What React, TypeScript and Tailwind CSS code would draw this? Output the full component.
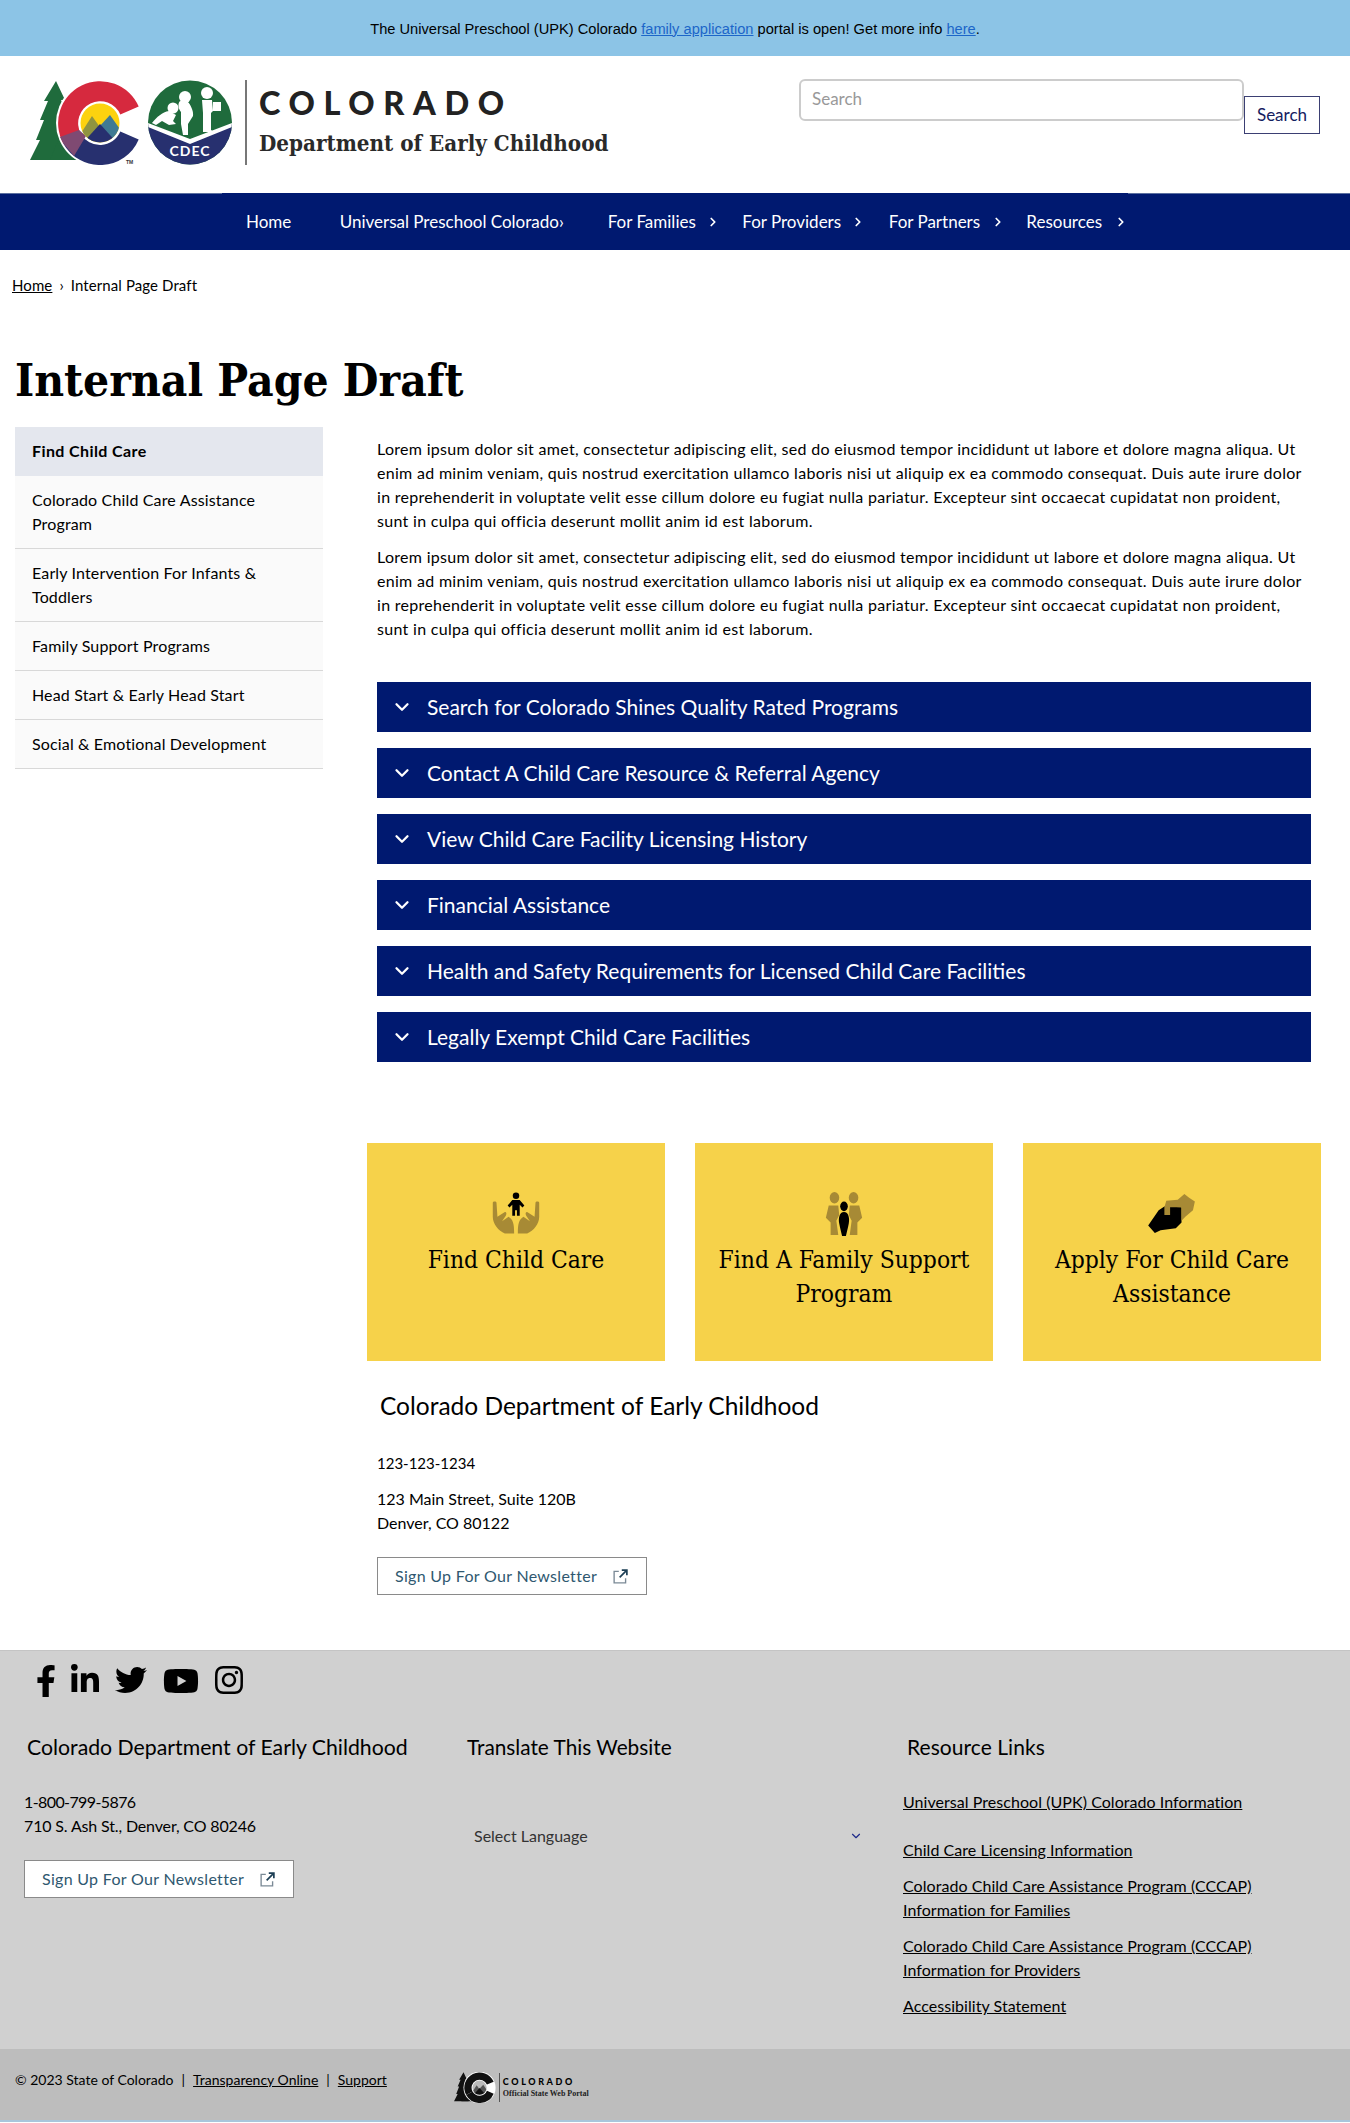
import { ChevronDown, ChevronRight } from "lucide-react";
import { FaFacebookF, FaInstagram, FaLinkedinIn, FaTwitter, FaYoutube } from "react-icons/fa";

const slab = "font-['DejaVu_Serif_Condensed','DejaVu_Serif',serif]";
const sans = "font-['Lato','Noto_Sans',sans-serif]";

const lorem =
  "Lorem ipsum dolor sit amet, consectetur adipiscing elit, sed do eiusmod tempor incididunt ut labore et dolore magna aliqua. Ut enim ad minim veniam, quis nostrud exercitation ullamco laboris nisi ut aliquip ex ea commodo consequat. Duis aute irure dolor in reprehenderit in voluptate velit esse cillum dolore eu fugiat nulla pariatur. Excepteur sint occaecat cupidatat non proident, sunt in culpa qui officia deserunt mollit anim id est laborum.";

const sideItems = [
  "Colorado Child Care Assistance Program",
  "Early Intervention For Infants & Toddlers",
  "Family Support Programs",
  "Head Start & Early Head Start",
  "Social & Emotional Development",
];

const accordions = [
  "Search for Colorado Shines Quality Rated Programs",
  "Contact A Child Care Resource & Referral Agency",
  "View Child Care Facility Licensing History",
  "Financial Assistance",
  "Health and Safety Requirements for Licensed Child Care Facilities",
  "Legally Exempt Child Care Facilities",
];

function CoMark({ mono = false }: { mono?: boolean }) {
  const tree = mono ? "#111" : "#1f6b3c";
  const red = mono ? "#111" : "#d6293e";
  const blue = mono ? "#111" : "#27306f";
  return (
    <>
      <path
        d="M26 1 L35 20 L31 20 L38 36 L34 36 L40 80 L0 80 L10 60 L6 60 L14 40 L10 40 L18 21 L14 21 Z"
        fill={tree}
      />
      <path d="M30 56 L50 80 L20 80 Z" fill={tree} />
      <circle cx="70" cy="43" r="44" fill="#fff" />
      <path d="M108.7 26.6 A42 42 0 1 0 33.3 63.4 L50.8 53.7 A22 22 0 1 1 90.3 34.4 Z" fill={red} />
      <path d="M33.3 63.4 A42 42 0 0 0 108.7 59.4 L90.3 51.6 A22 22 0 0 1 50.8 53.7 Z" fill={blue} />
      {!mono && <path d="M30 57 L33.3 63.4 L44 76 L56 56 L49 50 Z" fill="#7f4a72" />}
      <clipPath id={mono ? "sun-mono" : "sun"}>
        <circle cx="70" cy="43" r="19.5" />
      </clipPath>
      <g clipPath={mono ? "url(#sun-mono)" : "url(#sun)"}>
        <rect x="48" y="22" width="44" height="44" fill={mono ? "#bbb" : "#fcd20f"} />
        <path d="M48 58 L62 36 L72 50 L60 66 Z" fill={mono ? "#555" : "#8f9440"} />
        <path d="M68 48 L80 35 L92 52 L84 60 Z" fill={mono ? "#555" : "#3f7a93"} />
        <path d="M50 66 L70 44 L90 66 Z" fill={blue} />
      </g>
      {!mono && (
        <text x="96" y="84" fontSize="5" fontWeight="700" fill="#333" fontFamily="Liberation Sans">
          TM
        </text>
      )}
    </>
  );
}

function HeaderLogo() {
  return (
    <svg viewBox="0 0 206 85" className="w-[206px] h-[85px] shrink-0">
      <CoMark />
      {/* CDEC badge */}
      <clipPath id="badge">
        <circle cx="160" cy="42.5" r="42" />
      </clipPath>
      <g clipPath="url(#badge)">
        <rect x="118" y="0" width="84" height="85" fill="#1f6b3c" />
        <path d="M118 44 L160 60 L202 44 L202 85 L118 85 Z" fill="#27306f" />
        <path d="M118 43 L160 59 L202 43 L202 47 L160 64 L118 47 Z" fill="#fff" />
        {/* baby */}
        <circle cx="143" cy="28" r="5.5" fill="#fff" />
        <path d="M139 31 C132 32 127 37 122 43 L126 45 L132 41 L139 45 L146 44 L143 41 L146 35 Z" fill="#fff" />
        {/* toddler */}
        <circle cx="155" cy="17" r="6" fill="#fff" />
        <path d="M150 21 C147 24 149 30 151 32 L151 44 L153 55 L158 55 L158 44 L163 36 C164 31 160 24 158 22 Z" fill="#fff" />
        {/* child with book */}
        <circle cx="177" cy="13" r="6" fill="#fff" />
        <path d="M172 20 L182 20 L183 31 L181 33 L181 50 L184 52 L173 52 L173 33 Z" fill="#fff" />
        <rect x="183" y="22" width="8" height="9" fill="#fff" />
        <text x="160" y="76" textAnchor="middle" fontSize="14" fontWeight="700" fill="#fff" letterSpacing="1" fontFamily="Lato">
          CDEC
        </text>
      </g>
    </svg>
  );
}

function SmallLogo() {
  return (
    <div className="flex items-center h-[31px]">
      <svg viewBox="0 0 115 85" className="w-[42px] h-[31px]">
        <CoMark mono />
      </svg>
      <div className="ml-[3px] pl-[3px] border-l border-[#555] h-[29px] flex flex-col justify-center">
        <div className={`${sans} font-black text-[9px] leading-[12px] tracking-[2.6px] text-black`}>COLORADO</div>
        <div className="font-['Liberation_Serif',serif] font-bold text-[8px] leading-[11px] text-[#222]">
          Official State Web Portal
        </div>
      </div>
    </div>
  );
}

function ExternalIcon() {
  return (
    <svg viewBox="0 0 20 20" className="w-[17px] h-[17px]" fill="none" strokeWidth="1.6">
      <path d="M8 4 H2.5 V17.5 H16 V12" stroke="#7b8a96" />
      <path d="M9 11 L17.5 2.5 M11.5 2.5 H17.5 V8.5" stroke="#1d3f55" strokeWidth="2" />
    </svg>
  );
}

function NewsletterButton({ className }: { className: string }) {
  return (
    <a className={`flex items-center w-[270px] h-[38px] pl-[17px] bg-white border border-[#8a8a8a] text-[#2f5870] text-[16px] ${className}`}>
      <span className="tracking-[0.3px]">Sign Up For Our Newsletter</span>
      <span className="ml-[15px]">
        <ExternalIcon />
      </span>
    </a>
  );
}

function HandsIcon() {
  return (
    <svg viewBox="0 0 56 44" className="w-[52px] h-[42px]">
      <g fill="#a78a35">
        <path d="M3 11 C3 9 7 9 7 11 L8 26 L16 21 C18 21 18 23 17 25 L13 31 L20 26 C25 29 26 34 26 44 L16 44 C9 41 3 34 3 26 Z" />
        <path d="M53 11 C53 9 49 9 49 11 L48 26 L40 21 C38 21 38 23 39 25 L43 31 L36 26 C31 29 30 34 30 44 L40 44 C47 41 53 34 53 26 Z" />
      </g>
      <g fill="#000">
        <circle cx="28" cy="3.5" r="3.5" />
        <path d="M24 8 H32 L37 14 L35 16 L32 13 V25 H29 V19 H27 V25 H24 V13 L21 16 L19 14 Z" />
      </g>
    </svg>
  );
}

function FamilyIcon() {
  return (
    <svg viewBox="0 0 44 46" className="w-[42px] h-[44px]">
      <g fill="#a78a35">
        <ellipse cx="12" cy="6" rx="5" ry="6" />
        <ellipse cx="32" cy="6" rx="5" ry="6" />
        <path d="M6 14 H16 L17 24 L14 30 L16 45 H8 L8 32 L3 27 Z" />
        <path d="M38 14 H28 L27 24 L30 30 L28 45 H36 L36 32 L41 27 Z" />
      </g>
      <g fill="#000">
        <ellipse cx="22" cy="15" rx="4" ry="5" />
        <path d="M22 21 C27 21 28 28 27 33 C26 38 25 42 24 46 H20 C19 42 18 38 17 33 C16 28 17 21 22 21 Z" />
      </g>
    </svg>
  );
}

function HandIcon() {
  return (
    <svg viewBox="0 0 52 42" className="w-[50px] h-[40px]">
      <path d="M1 33 L12 17 L18 13 L36 14 L36 30 L30 36 L14 38 L8 41 Z" fill="#000" />
      <path d="M18 14 L20 7 L32 6 L39 0 L44 4 L50 8 L48 17 L40 24 L36 28 L36 14 L24 14 L24 22 L18 22 Z" fill="#a78a35" />
    </svg>
  );
}

export default function App() {
  return (
    <div className={`w-[1350px] bg-white text-black ${sans} text-[16px] leading-[24px]`}>
      {/* alert banner */}
      <div className="h-[56px] pt-[1px] bg-[#8cc4e6] flex items-center justify-center font-['Liberation_Sans',sans-serif] text-[14.65px]">
        <p>
          The Universal Preschool (UPK) Colorado{" "}
          <a className="text-[#1c66c9] underline">family application</a> portal is open! Get more info{" "}
          <a className="text-[#1c66c9] underline">here</a>.
        </p>
      </div>

      {/* header */}
      <header className="h-[137px] flex">
        <div className="pl-[30px] pt-[24px] flex">
          <HeaderLogo />
          <div className="ml-[9px] w-[2px] h-[85px] bg-[#777]" />
          <div className="ml-[12px]">
            <div className="mt-[5px] text-[32.5px] leading-[36px] font-black tracking-[8.6px] text-[#222]">COLORADO</div>
            <div className={`${slab} mt-[8px] text-[22.2px] leading-[28px] font-bold text-[#2a2a2a]`}>
              Department of Early Childhood
            </div>
          </div>
        </div>
        <div className="ml-auto mr-[30px] flex items-start">
          <div className="mt-[23px] w-[445px] h-[42px] border-2 border-[#ccc] rounded-[6px] flex items-center pl-[11px] pb-[2px] text-[17px] text-[#999]">
            Search
          </div>
          <button className="mt-[40px] w-[76px] h-[38px] border border-[#3b3f73] text-[#14205f] text-[17px]">Search</button>
        </div>
      </header>

      {/* main nav */}
      <nav className="h-[57px] bg-[#001970] border-t border-[#5b6f9f] text-white">
        <div className="w-[906px] ml-[222px] h-full bg-[#001970] -mt-px border-t border-[#001970] flex items-center text-[17px]">
          <a className="ml-[24px] w-[94px]">Home</a>
          <a className="w-[269px]">Universal Preschool Colorado›</a>
          <a className="flex items-center w-[135px]">
            For Families
            <ChevronRight className="ml-[10px] w-[14px] h-[14px]" strokeWidth={3} />
          </a>
          <a className="flex items-center w-[147px]">
            For Providers
            <ChevronRight className="ml-[10px] w-[14px] h-[14px]" strokeWidth={3} />
          </a>
          <a className="flex items-center w-[138px]">
            For Partners
            <ChevronRight className="ml-[11px] w-[14px] h-[14px]" strokeWidth={3} />
          </a>
          <a className="flex items-center">
            Resources
            <ChevronRight className="ml-[12px] w-[14px] h-[14px]" strokeWidth={3} />
          </a>
        </div>
      </nav>

      {/* breadcrumb */}
      <div className="pl-[12px] mt-[23px] text-[15px] tracking-[0.1px] flex">
        <a className="underline">Home</a>
        <span className="mx-[7px]">›</span>
        <span>Internal Page Draft</span>
      </div>

      <h1 className={`${slab} ml-[15px] mt-[51px] mb-[15px] h-[64px] text-[45.7px] leading-[64px] font-bold`}>
        Internal Page Draft
      </h1>

      <div className="flex pl-[15px]">
        {/* side nav */}
        <aside className="w-[308px] shrink-0 self-start tracking-[0.15px]">
          <div className="h-[49px] bg-[#e4e7ee] pl-[17px] pb-[2px] flex items-center font-bold tracking-[0.4px]">Find Child Care</div>
          {sideItems.map((item) => (
            <div key={item} className="bg-[#fafafa] border-b border-[#d8d8d8] px-[17px] py-[12px] pr-[40px]">
              {item}
            </div>
          ))}
        </aside>

        {/* content */}
        <main className="ml-[54px] w-[934px] pt-[10px]">
          <p className="tracking-[0.3px]">{lorem}</p>
          <p className="mt-[12px] tracking-[0.3px]">{lorem}</p>

          <div className="mt-[41px] flex flex-col gap-[16px]">
            {accordions.map((title) => (
              <div key={title} className="h-[50px] bg-[#001970] text-white flex items-center pl-[14px] text-[21px]">
                <ChevronDown className="w-[22px] h-[22px] mr-[14px]" strokeWidth={2.5} />
                {title}
              </div>
            ))}
          </div>

          <div className="mt-[81px] -ml-[10px] w-[954px] flex justify-between">
            <div className="w-[298px] h-[218px] bg-[#f6d24a] pt-[49px] px-[20px] flex flex-col items-center text-center">
              <HandsIcon />
              <div className={`${slab} mt-[9px] text-[24.4px] leading-[34px]`}>Find Child Care</div>
            </div>
            <div className="w-[298px] h-[218px] bg-[#f6d24a] pt-[49px] px-[20px] flex flex-col items-center text-center">
              <FamilyIcon />
              <div className={`${slab} mt-[7px] text-[24.4px] leading-[34px]`}>Find A Family Support Program</div>
            </div>
            <div className="w-[298px] h-[218px] bg-[#f6d24a] pt-[51px] px-[20px] flex flex-col items-center text-center">
              <HandIcon />
              <div className={`${slab} mt-[9px] text-[24.4px] leading-[34px]`}>Apply For Child Care Assistance</div>
            </div>
          </div>

          <h2 className="mt-[29px] ml-[3px] text-[24.5px] leading-[32px]">Colorado Department of Early Childhood</h2>
          <p className="mt-[29px] text-[15px]">123-123-1234</p>
          <p className="mt-[12px]">
            123 Main Street, Suite 120B
            <br />
            Denver, CO 80122
          </p>
          <NewsletterButton className="mt-[22px]" />
        </main>
      </div>

      {/* footer */}
      <footer className="mt-[55px] h-[399px] bg-[#d0d0d0] border-t border-[#c4c4c4]">
        <div className="h-[64px] pl-[36px] pt-[13px] flex items-start text-black">
          <FaFacebookF className="w-[20px] h-[34px]" />
          <FaLinkedinIn className="ml-[13px] w-[32px] h-[32px]" />
          <FaTwitter className="ml-[13px] w-[34px] h-[32px]" />
          <FaYoutube className="ml-[15px] w-[36px] h-[34px]" />
          <FaInstagram className="ml-[15px] w-[30px] h-[32px]" />
        </div>
        <div className="flex mt-[16px]">
          <div className="ml-[24px] w-[443px]">
            <h3 className="ml-[3px] text-[21.25px] leading-[32px]">Colorado Department of Early Childhood</h3>
            <p className="mt-[27px]">
              <span className="tracking-[-0.6px]">1-800-799-5876</span>
              <br />
              <span className="tracking-[-0.15px]">710 S. Ash St., Denver, CO 80246</span>
            </p>
            <NewsletterButton className="mt-[22px]" />
          </div>
          <div className="w-[436px]">
            <h3 className="text-[20.8px] leading-[32px]">Translate This Website</h3>
            <div className="mt-[49px] ml-[7px] w-[389px] h-[48px] flex items-center justify-between text-[#333]">
              Select Language
              <ChevronDown className="w-[14px] h-[14px] text-[#1e2a8a]" strokeWidth={2} />
            </div>
          </div>
          <div className="w-[420px] tracking-[0.05px]">
            <h3 className="ml-[4px] text-[21px] leading-[32px]">Resource Links</h3>
            <a className="block mt-[27px] underline">Universal Preschool (UPK) Colorado Information</a>
            <a className="block mt-[24px] underline">Child Care Licensing Information</a>
            <a className="block mt-[12px] underline">
              Colorado Child Care Assistance Program (CCCAP)
              <br />
              Information for Families
            </a>
            <a className="block mt-[12px] underline">
              Colorado Child Care Assistance Program (CCCAP)
              <br />
              Information for Providers
            </a>
            <a className="block mt-[12px] underline">Accessibility Statement</a>
          </div>
        </div>
      </footer>

      {/* legal bar */}
      <div className="h-[71px] bg-[#bdbdbd] pl-[15px] pt-[19px] flex items-start text-[14px]">
        <span>© 2023 State of Colorado</span>
        <span className="mx-[8px]">|</span>
        <a className="underline">Transparency Online</a>
        <span className="mx-[8px]">|</span>
        <a className="underline">Support</a>
        <div className="ml-[67px] mt-[4px]">
          <SmallLogo />
        </div>
      </div>
      <div className="h-[2px] bg-[#a9c6dc]" />
    </div>
  );
}
